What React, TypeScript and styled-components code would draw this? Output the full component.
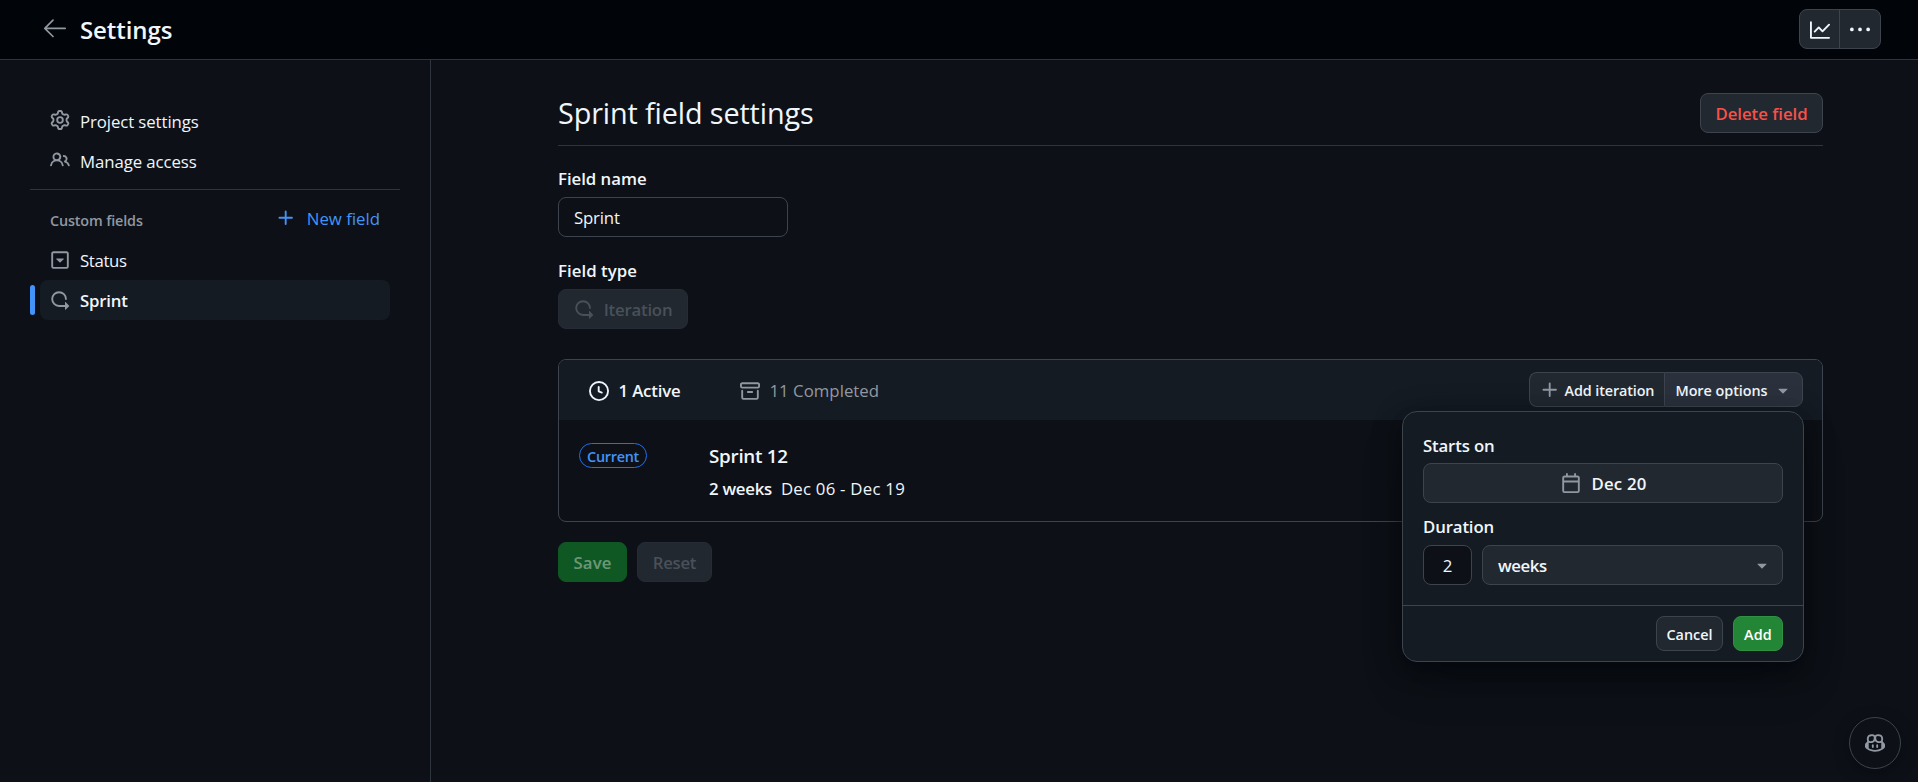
import React from "react";
import styled, { createGlobalStyle, css } from "styled-components";

const color = {
  inset: "#010409",
  canvas: "#0d1117",
  panel: "#151b23",
  control: "#212830",
  controlActive: "#2a313c",
  border: "#3d444d",
  borderMuted: "#2f353d",
  text: "#f0f6fc",
  muted: "#9198a1",
  disabled: "#495059",
  accent: "#4493f8",
  danger: "#f85149",
};

const GlobalStyle = createGlobalStyle`
  *, *::before, *::after { box-sizing: border-box; }
  body {
    margin: 0;
    background: ${color.canvas};
    color: ${color.text};
    font-family: "Open Sans", "Noto Sans", sans-serif;
    font-size: 16.8px;
    line-height: 24px;
    overflow: hidden;
  }
  button, input { font: inherit; color: inherit; margin: 0; }
  h1, h2, h3, p { margin: 0; }
`;

const paths = {
  gear: "M8 0a8.2 8.2 0 0 1 .701.031C9.444.095 9.99.645 10.16 1.29l.288 1.107c.018.066.079.158.212.224.231.114.454.243.668.386.123.082.233.09.299.071l1.103-.303c.644-.176 1.392.021 1.82.63.27.385.506.792.704 1.218.315.675.111 1.422-.364 1.891l-.814.806c-.049.048-.098.147-.088.294.016.257.016.515 0 .772-.01.147.038.246.088.294l.814.806c.475.469.679 1.216.364 1.891a7.977 7.977 0 0 1-.704 1.217c-.428.61-1.176.807-1.82.63l-1.102-.302c-.067-.019-.177-.011-.3.071a5.909 5.909 0 0 1-.668.386c-.133.066-.194.158-.211.224l-.29 1.106c-.168.646-.715 1.196-1.458 1.26a8.006 8.006 0 0 1-1.402 0c-.743-.064-1.289-.614-1.458-1.26l-.289-1.106c-.018-.066-.079-.158-.212-.224a5.738 5.738 0 0 1-.668-.386c-.123-.082-.233-.09-.299-.071l-1.103.303c-.644.176-1.392-.021-1.82-.63a8.12 8.12 0 0 1-.704-1.218c-.315-.675-.111-1.422.363-1.891l.815-.806c.05-.048.098-.147.088-.294a6.214 6.214 0 0 1 0-.772c.01-.147-.038-.246-.088-.294l-.815-.806C.635 6.045.431 5.298.746 4.623a7.92 7.92 0 0 1 .704-1.217c.428-.61 1.176-.807 1.82-.63l1.102.302c.067.019.177.011.3-.071.214-.143.437-.272.668-.386.133-.066.194-.158.211-.224l.29-1.106C6.009.645 6.556.095 7.299.03 7.53.01 7.764 0 8 0Zm-.571 1.525c-.036.003-.108.036-.137.146l-.289 1.105c-.147.561-.549.967-.998 1.189-.173.086-.34.183-.5.29-.417.278-.97.423-1.529.27l-1.103-.303c-.109-.03-.175.016-.195.045-.22.312-.412.644-.573.99-.014.031-.021.11.059.19l.815.806c.411.406.562.957.53 1.456a4.709 4.709 0 0 0 0 .582c.032.499-.119 1.05-.53 1.456l-.815.806c-.081.08-.073.159-.059.19.162.346.353.677.573.989.02.03.085.076.195.046l1.102-.303c.56-.153 1.113-.008 1.53.27.161.107.328.204.501.29.447.222.85.629.997 1.189l.289 1.105c.029.109.101.143.137.146a6.6 6.6 0 0 0 1.142 0c.036-.003.108-.036.137-.146l.289-1.105c.147-.561.549-.967.998-1.189.173-.086.34-.183.5-.29.417-.278.97-.423 1.529-.27l1.103.303c.109.029.175-.016.195-.045.22-.313.411-.644.573-.99.014-.031.021-.11-.059-.19l-.815-.806c-.411-.406-.562-.957-.53-1.456a4.709 4.709 0 0 0 0-.582c-.032-.499.119-1.05.53-1.456l.815-.806c.081-.08.073-.159.059-.19a6.464 6.464 0 0 0-.573-.989c-.02-.03-.085-.076-.195-.046l-1.102.303c-.56.153-1.113.008-1.53-.27a4.44 4.44 0 0 0-.501-.29c-.447-.222-.85-.629-.997-1.189l-.289-1.105c-.029-.11-.101-.143-.137-.146a6.6 6.6 0 0 0-1.142 0ZM11 8a3 3 0 1 1-6 0 3 3 0 0 1 6 0ZM9.5 8a1.5 1.5 0 1 0-3.001.001A1.5 1.5 0 0 0 9.5 8Z",
  people: "M2 5.5a3.5 3.5 0 1 1 5.898 2.549 5.508 5.508 0 0 1 3.034 4.084.75.75 0 1 1-1.482.235 4 4 0 0 0-7.9 0 .75.75 0 0 1-1.482-.236A5.507 5.507 0 0 1 3.102 8.05 3.493 3.493 0 0 1 2 5.5ZM11 4a3.001 3.001 0 0 1 2.22 5.018 5.01 5.01 0 0 1 2.56 3.012.749.749 0 0 1-.885.954.752.752 0 0 1-.549-.514 3.507 3.507 0 0 0-2.522-2.372.75.75 0 0 1-.574-.73v-.352a.75.75 0 0 1 .416-.672A1.5 1.5 0 0 0 11 5.5.75.75 0 0 1 11 4Zm-5.5-.5a2 2 0 1 0-.001 3.999A2 2 0 0 0 5.5 3.5Z",
  plus: "M7.75 2a.75.75 0 0 1 .75.75V7h4.25a.75.75 0 0 1 0 1.5H8.5v4.25a.75.75 0 0 1-1.5 0V8.5H2.75a.75.75 0 0 1 0-1.5H7V2.75A.75.75 0 0 1 7.75 2Z",
  select: "M5.06 7.356 7.795 9.95c.114.107.296.107.41 0l2.735-2.594c.186-.175.055-.481-.205-.481H5.265c-.26 0-.39.306-.205.481ZM1 2.75C1 1.784 1.784 1 2.75 1h10.5c.966 0 1.75.784 1.75 1.75v10.5A1.75 1.75 0 0 1 13.25 15H2.75A1.75 1.75 0 0 1 1 13.25Zm1.75-.25a.25.25 0 0 0-.25.25v10.5c0 .138.112.25.25.25h10.5a.25.25 0 0 0 .25-.25V2.75a.25.25 0 0 0-.25-.25Z",
  iterations: "M2.5 7.25a4.75 4.75 0 0 1 9.5 0 .75.75 0 0 0 1.5 0 6.25 6.25 0 1 0-6.25 6.25H12v2.146c0 .223.27.335.427.177l2.896-2.896a.25.25 0 0 0 0-.354l-2.896-2.896a.25.25 0 0 0-.427.177V12H7.25A4.75 4.75 0 0 1 2.5 7.25Z",
  clock: "M8 0a8 8 0 1 1 0 16A8 8 0 0 1 8 0ZM1.5 8a6.5 6.5 0 1 0 13 0 6.5 6.5 0 0 0-13 0Zm7-3.25v2.992l2.028.812a.75.75 0 0 1-.557 1.392l-2.5-1A.751.751 0 0 1 7 8.25v-3.5a.75.75 0 0 1 1.5 0Z",
  archive: "M0 2.75C0 1.784.784 1 1.75 1h12.5c.966 0 1.75.784 1.75 1.75v1.5A1.75 1.75 0 0 1 14.25 6H1.75A1.75 1.75 0 0 1 0 4.25ZM1.75 7a.75.75 0 0 1 .75.75v5.5c0 .138.112.25.25.25h10.5a.25.25 0 0 0 .25-.25v-5.5a.75.75 0 0 1 1.5 0v5.5A1.75 1.75 0 0 1 13.25 15H2.75A1.75 1.75 0 0 1 1 13.25v-5.5A.75.75 0 0 1 1.75 7Zm0-4.5a.25.25 0 0 0-.25.25v1.5c0 .138.112.25.25.25h12.5a.25.25 0 0 0 .25-.25v-1.5a.25.25 0 0 0-.25-.25ZM6.25 8h3.5a.75.75 0 0 1 0 1.5h-3.5a.75.75 0 0 1 0-1.5Z",
  triangle: "m4.427 7.427 3.396 3.396a.25.25 0 0 0 .354 0l3.396-3.396A.25.25 0 0 0 11.396 7H4.604a.25.25 0 0 0-.177.427Z",
  calendar: "M4.75 0a.75.75 0 0 1 .75.75V2h5V.75a.75.75 0 0 1 1.5 0V2h1.25c.966 0 1.75.784 1.75 1.75v10.5A1.75 1.75 0 0 1 13.25 16H2.75A1.75 1.75 0 0 1 1 14.25V3.75C1 2.784 1.784 2 2.75 2H4V.75A.75.75 0 0 1 4.75 0ZM2.5 7.5v6.75c0 .138.112.25.25.25h10.5a.25.25 0 0 0 .25-.25V7.5Zm10.75-4H2.75a.25.25 0 0 0-.25.25V6h11V3.75a.25.25 0 0 0-.25-.25Z",
  graph: "M1.5 1.75V13.5h13.75a.75.75 0 0 1 0 1.5H.75a.75.75 0 0 1-.75-.75V1.75a.75.75 0 0 1 1.5 0Zm14.28 2.53-5.25 5.25a.75.75 0 0 1-1.06 0L7 7.06 4.28 9.78a.751.751 0 0 1-1.042-.018.751.751 0 0 1-.018-1.042l3.25-3.25a.75.75 0 0 1 1.06 0L10 7.94l4.72-4.72a.751.751 0 0 1 1.042.018.751.751 0 0 1 .018 1.042Z",
  kebab: "M8 9a1.5 1.5 0 1 0 0-3 1.5 1.5 0 0 0 0 3ZM1.5 9a1.5 1.5 0 1 0 0-3 1.5 1.5 0 0 0 0 3Zm13 0a1.5 1.5 0 1 0 0-3 1.5 1.5 0 0 0 0 3Z",
  copilot: "M7.998 15.035c-4.562 0-7.873-2.914-7.998-3.749V9.338c.085-.628.677-1.686 1.588-2.065.013-.07.024-.143.036-.218.029-.183.06-.384.126-.612-.201-.508-.254-1.084-.254-1.656 0-.87.128-1.769.693-2.484.579-.733 1.494-1.124 2.724-1.261 1.206-.134 2.262.034 2.944.765.05.053.096.108.139.165.044-.057.094-.112.143-.165.682-.731 1.738-.899 2.944-.765 1.23.137 2.145.528 2.724 1.261.566.715.693 1.614.693 2.484 0 .572-.053 1.148-.254 1.656.066.228.098.429.126.612.012.076.024.148.037.218.924.385 1.522 1.471 1.591 2.095v1.872c0 .766-3.351 3.795-8.002 3.795Zm0-1.485c2.28 0 4.584-1.11 5.002-1.433V7.862l-.023-.116c-.49.21-1.075.291-1.727.291-1.146 0-2.059-.327-2.71-.991A3.222 3.222 0 0 1 8 6.303a3.24 3.24 0 0 1-.544.743c-.65.664-1.563.991-2.71.991-.652 0-1.236-.081-1.727-.291l-.023.116v4.255c.419.323 2.722 1.433 5.002 1.433ZM6.762 2.83c-.193-.206-.637-.413-1.682-.297-1.019.113-1.479.404-1.713.7-.247.312-.369.789-.369 1.554 0 .793.129 1.171.308 1.371.162.181.519.379 1.442.379.853 0 1.339-.235 1.638-.54.315-.322.527-.827.617-1.553.117-.935-.037-1.395-.241-1.614Zm4.155-.297c-1.044-.116-1.488.091-1.681.297-.204.219-.359.679-.242 1.614.091.726.303 1.231.618 1.553.299.305.784.54 1.638.54.922 0 1.28-.198 1.442-.379.179-.2.308-.578.308-1.371 0-.765-.123-1.242-.37-1.554-.233-.296-.693-.587-1.713-.7ZM6.25 9.037a.75.75 0 0 1 .75.75v1.501a.75.75 0 0 1-1.5 0V9.787a.75.75 0 0 1 .75-.75Zm4.25.75v1.501a.75.75 0 0 1-1.5 0V9.787a.75.75 0 0 1 1.5 0Z",
};

const Svg = styled.svg`
  display: block;
  flex: none;
  fill: currentColor;
`;

const Icon = ({ name }: { name: keyof typeof paths }) => (
  <Svg width="20" height="20" viewBox="0 0 16 16" aria-hidden="true">
    <path fillRule="evenodd" d={paths[name]} />
  </Svg>
);

const Label = styled.span<{ $track?: number }>`
  padding-top: 2px;
  letter-spacing: ${(p) => p.$track ?? 0}px;
  white-space: pre;
`;

const Page = styled.div`
  height: 782px;
  display: flex;
  flex-direction: column;
`;

const Header = styled.header`
  height: 60px;
  flex: none;
  display: flex;
  align-items: center;
  padding: 0 37px 1px 42px;
  background: ${color.inset};
  border-bottom: 1px solid ${color.borderMuted};
`;

const BackLink = styled.a`
  display: flex;
  width: 38px;
  padding-bottom: 2px;
  color: ${color.muted};
`;

const HeaderTitle = styled.h1`
  flex: 1;
  padding-top: 2px;
  font-size: 24px;
  font-weight: 600;
  line-height: 30px;
  letter-spacing: -0.08px;
`;

const HeaderActions = styled.div`
  display: flex;
  height: 40px;
  border: 1px solid ${color.border};
  border-radius: 8px;
  background: ${color.control};
`;

const IconButton = styled.button`
  width: 39px;
  padding: 2px 0 0;
  display: flex;
  align-items: center;
  justify-content: center;
  border: 0;
  background: none;
  & + & {
    width: 41px;
    border-left: 1px solid ${color.border};
  }
`;

const Body = styled.div`
  flex: 1;
  display: flex;
`;

const Sidebar = styled.nav`
  width: 431px;
  flex: none;
  padding: 41px 30px 0;
  border-right: 1px solid ${color.borderMuted};
`;

const NavItem = styled.a<{ $selected?: boolean; $raised?: boolean }>`
  display: flex;
  align-items: center;
  gap: 10px;
  height: 40px;
  margin: 0 10px;
  padding: 0 10px;
  border-radius: 8px;
  svg {
    color: ${color.muted};
    margin-bottom: ${(p) => (p.$raised ? 2 : 0)}px;
  }
  ${(p) =>
    p.$selected &&
    css`
      position: relative;
      background: ${color.panel};
      font-weight: 600;
      &::before {
        content: "";
        position: absolute;
        left: -10px;
        top: 5px;
        width: 5px;
        height: 30px;
        border-radius: 8px;
        background: ${color.accent};
      }
    `}
`;

const NavDivider = styled.div`
  height: 1px;
  margin: 8px 0 9px;
  background: ${color.borderMuted};
`;

const NavHeading = styled.div`
  height: 41px;
  display: flex;
  align-items: center;
  justify-content: space-between;
  padding: 0 20px;
  font-size: 14.4px;
  font-weight: 600;
  color: ${color.muted};
`;

const NewFieldLink = styled.a`
  display: flex;
  align-items: center;
  gap: 11px;
  padding-bottom: 4px;
  font-size: 16.8px;
  font-weight: 400;
  color: ${color.accent};
`;

const Main = styled.main`
  flex: 1;
  padding: 33px 95px 0 127px;
`;

const TitleRow = styled.div`
  height: 53px;
  display: flex;
  justify-content: space-between;
  align-items: flex-start;
  border-bottom: 1px solid ${color.borderMuted};
`;

const Title = styled.h2`
  font-size: 28.8px;
  font-weight: 400;
  line-height: 40px;
  letter-spacing: -0.12px;
`;

type ButtonProps = { $size?: "small"; $variant?: "danger" | "primary" | "primaryDisabled" | "disabled" };

const Button = styled.button<ButtonProps>`
  height: 40px;
  display: inline-flex;
  align-items: center;
  justify-content: center;
  gap: 10px;
  padding: 0 15px;
  border: 1px solid ${color.border};
  border-radius: 8px;
  background: ${color.control};
  font-weight: 600;
  line-height: 24px;
  svg { color: ${color.muted}; }
  ${(p) => p.$size === "small" && css`height: 35px; padding: 0 10px; font-size: 14.4px;`}
  ${(p) => p.$variant === "danger" && css`width: 123px; color: ${color.danger};`}
  ${(p) => p.$variant === "primary" && css`background: #238636; border-color: #2f9142; color: #fff;`}
  ${(p) =>
    p.$variant === "primaryDisabled" &&
    css`background: #105823; border-color: #105823; color: rgba(255, 255, 255, 0.4);`}
  ${(p) =>
    p.$variant === "disabled" &&
    css`
      border-color: #262c36;
      color: ${color.disabled};
      svg { color: ${color.disabled}; }
    `}
`;

const FieldLabel = styled.h3`
  height: 25px;
  font-size: 16.8px;
  font-weight: 600;
  line-height: 25px;
`;

const Field = styled.div<{ $top: number; $gap: number; $width?: number }>`
  display: flex;
  flex-direction: column;
  align-items: flex-start;
  gap: ${(p) => p.$gap}px;
  margin-top: ${(p) => p.$top}px;
  ${Button} { width: ${(p) => (p.$width ? `${p.$width}px` : "auto")}; }
`;

const TextInput = styled.input`
  width: 230px;
  height: 40px;
  padding: 1px 15px 0;
  border: 1px solid ${color.border};
  border-radius: 8px;
  outline: none;
  background: ${color.canvas};
  letter-spacing: -0.18px;
`;

const Panel = styled.section`
  position: relative;
  height: 163px;
  margin-top: 30px;
  border: 1px solid ${color.border};
  border-radius: 8px;
`;

const PanelHeader = styled.div`
  height: 60px;
  display: flex;
  align-items: center;
  padding: 2px 19px 0 30px;
  border-radius: 7px 7px 0 0;
  background: ${color.panel};
`;

const Tab = styled.a<{ $active?: boolean; $width: number }>`
  display: flex;
  align-items: center;
  gap: 10px;
  width: ${(p) => p.$width}px;
  color: ${(p) => (p.$active ? color.text : color.muted)};
  font-weight: ${(p) => (p.$active ? 600 : 400)};
  ${Label} { padding-top: 0; margin-left: -0.5px; }
`;

const ButtonGroup = styled.div`
  display: flex;
  margin-left: auto;
  margin-bottom: 3px;
`;

const GroupButton = styled(Button).attrs({ $size: "small" })<{ $first?: boolean }>`
  ${(p) =>
    p.$first
      ? css`
          width: 135px;
          gap: 5px;
          padding: 0 9px;
          border-right: 0;
          border-radius: 8px 0 0 8px;
        `
      : css`
          width: 139px;
          gap: 5px;
          padding: 0 9px 0 10px;
          border-radius: 0 8px 8px 0;
          background: ${color.controlActive};
        `}
`;

const IterationRow = styled.div`
  display: grid;
  grid-template-columns: 130px 1fr;
  padding: 23px 20px 0;
`;

const Badge = styled.span`
  width: 68px;
  height: 25px;
  display: flex;
  align-items: center;
  justify-content: center;
  border: 1px solid #1f6feb;
  border-radius: 13px;
  color: ${color.accent};
  font-size: 14.4px;
  font-weight: 600;
`;

const IterationName = styled.h3`
  height: 26px;
  font-size: 18.8px;
  font-weight: 600;
  line-height: 26px;
`;

const IterationDates = styled.p`
  display: flex;
  gap: 9px;
  margin-top: 6px;
  line-height: 24px;
  strong { display: flex; font-weight: 600; }
`;

const FormActions = styled.div`
  display: flex;
  gap: 10px;
  margin-top: 20px;
  ${Button}:first-child { width: 69px; }
  ${Button}:last-child { width: 75px; }
`;

const Popover = styled.div`
  position: absolute;
  top: 51px;
  right: 18px;
  width: 402px;
  height: 251px;
  display: flex;
  flex-direction: column;
  border: 1px solid ${color.border};
  border-radius: 15px;
  background: ${color.panel};
  box-shadow: 0 8px 16px -4px rgba(1, 4, 9, 0.4), 0 4px 32px -4px rgba(1, 4, 9, 0.4), 0 24px 48px -12px rgba(1, 4, 9, 0.4);
`;

const PopoverBody = styled.div`
  flex: 1;
  padding: 21px 20px 0;
`;

const StartButton = styled(Button)`
  width: 100%;
  margin: 5px 0 11px;
  padding-left: 17px;
`;

const DurationRow = styled.div`
  display: flex;
  gap: 10px;
  margin-top: 6px;
`;

const DurationInput = styled(TextInput)`
  width: 49px;
  padding: 0;
  text-align: center;
`;

const UnitSelect = styled(Button)`
  flex: 1;
  justify-content: space-between;
  padding: 0 10px 0 15px;
  ${Label} { padding-top: 1px; }
`;

const PopoverFooter = styled.div`
  height: 56px;
  display: flex;
  justify-content: flex-end;
  gap: 10px;
  padding: 10px 20px;
  border-top: 1px solid ${color.border};
  ${Button}:first-child { width: 67px; }
  ${Button}:last-child { width: 50px; }
`;

const CopilotButton = styled.button`
  position: fixed;
  right: 17px;
  bottom: 13px;
  width: 52px;
  height: 52px;
  padding: 0;
  display: flex;
  align-items: center;
  justify-content: center;
  border: 1px solid ${color.border};
  border-radius: 50%;
  background: ${color.canvas};
  color: ${color.muted};
  box-shadow: 0 4px 16px rgba(1, 4, 9, 0.4);
`;

export default function App() {
  return (
    <Page>
      <GlobalStyle />
      <Header>
        <BackLink>
          <Svg width="26" height="20" viewBox="0 0 26 20" aria-hidden="true">
            <path d="M23.2 10.3H3M11 2.1 2.8 10.3l8.2 8.2" fill="none" stroke="currentColor" strokeWidth="1.7" strokeLinecap="round" strokeLinejoin="round" />
          </Svg>
        </BackLink>
        <HeaderTitle>Settings</HeaderTitle>
        <HeaderActions>
          <IconButton aria-label="Insights"><Icon name="graph" /></IconButton>
          <IconButton aria-label="More"><Icon name="kebab" /></IconButton>
        </HeaderActions>
      </Header>
      <Body>
        <Sidebar>
          <NavItem $raised><Icon name="gear" /><Label $track={-0.09}>Project settings</Label></NavItem>
          <NavItem $raised><Icon name="people" /><Label $track={-0.08}>Manage access</Label></NavItem>
          <NavDivider />
          <NavHeading>
            <Label $track={-0.15}>Custom fields</Label>
            <NewFieldLink><Icon name="plus" /><Label $track={0}>New field</Label></NewFieldLink>
          </NavHeading>
          <NavItem><Icon name="select" /><Label $track={-0.36}>Status</Label></NavItem>
          <NavItem $selected><Icon name="iterations" /><Label $track={-0.2}>Sprint</Label></NavItem>
        </Sidebar>
        <Main>
          <TitleRow>
            <Title>Sprint field settings</Title>
            <Button $variant="danger"><Label $track={-0.03}>Delete field</Label></Button>
          </TitleRow>
          <Field $top={20} $gap={6}>
            <FieldLabel><Label $track={-0.03}>Field name</Label></FieldLabel>
            <TextInput defaultValue="Sprint" />
          </Field>
          <Field $top={21} $gap={6} $width={130}>
            <FieldLabel><Label $track={0.05}>Field type</Label></FieldLabel>
            <Button $variant="disabled"><Icon name="iterations" /><Label $track={-0.22}>Iteration</Label></Button>
          </Field>
          <Panel>
            <PanelHeader>
              <Tab $active $width={151}><Icon name="clock" /><Label $track={-0.15}>1 Active</Label></Tab>
              <Tab $width={150}><Icon name="archive" /><Label $track={0.02}>11 Completed</Label></Tab>
              <ButtonGroup>
                <GroupButton $first><Icon name="plus" /><Label $track={-0.12}>Add iteration</Label></GroupButton>
                <GroupButton><Label $track={-0.04}>More options</Label><Icon name="triangle" /></GroupButton>
              </ButtonGroup>
            </PanelHeader>
            <IterationRow>
              <Badge><Label $track={-0.28}>Current</Label></Badge>
              <div>
                <IterationName><Label $track={-0.25}>Sprint 12</Label></IterationName>
                <IterationDates>
                  <strong><Label $track={-0.27}>2 weeks</Label></strong>
                  <Label $track={0.24}>Dec 06 - Dec 19</Label>
                </IterationDates>
              </div>
            </IterationRow>
            <Popover>
              <PopoverBody>
                <FieldLabel><Label $track={-0.16}>Starts on</Label></FieldLabel>
                <StartButton><Icon name="calendar" /><Label $track={0.2}>Dec 20</Label></StartButton>
                <FieldLabel><Label $track={-0.14}>Duration</Label></FieldLabel>
                <DurationRow>
                  <DurationInput defaultValue="2" />
                  <UnitSelect><Label $track={-0.42}>weeks</Label><Icon name="triangle" /></UnitSelect>
                </DurationRow>
              </PopoverBody>
              <PopoverFooter>
                <Button $size="small"><Label $track={0}>Cancel</Label></Button>
                <Button $size="small" $variant="primary"><Label $track={0.2}>Add</Label></Button>
              </PopoverFooter>
            </Popover>
          </Panel>
          <FormActions>
            <Button $variant="primaryDisabled"><Label $track={0.1}>Save</Label></Button>
            <Button $variant="disabled"><Label $track={-0.3}>Reset</Label></Button>
          </FormActions>
        </Main>
      </Body>
      <CopilotButton aria-label="Chat with Copilot"><Icon name="copilot" /></CopilotButton>
    </Page>
  );
}
